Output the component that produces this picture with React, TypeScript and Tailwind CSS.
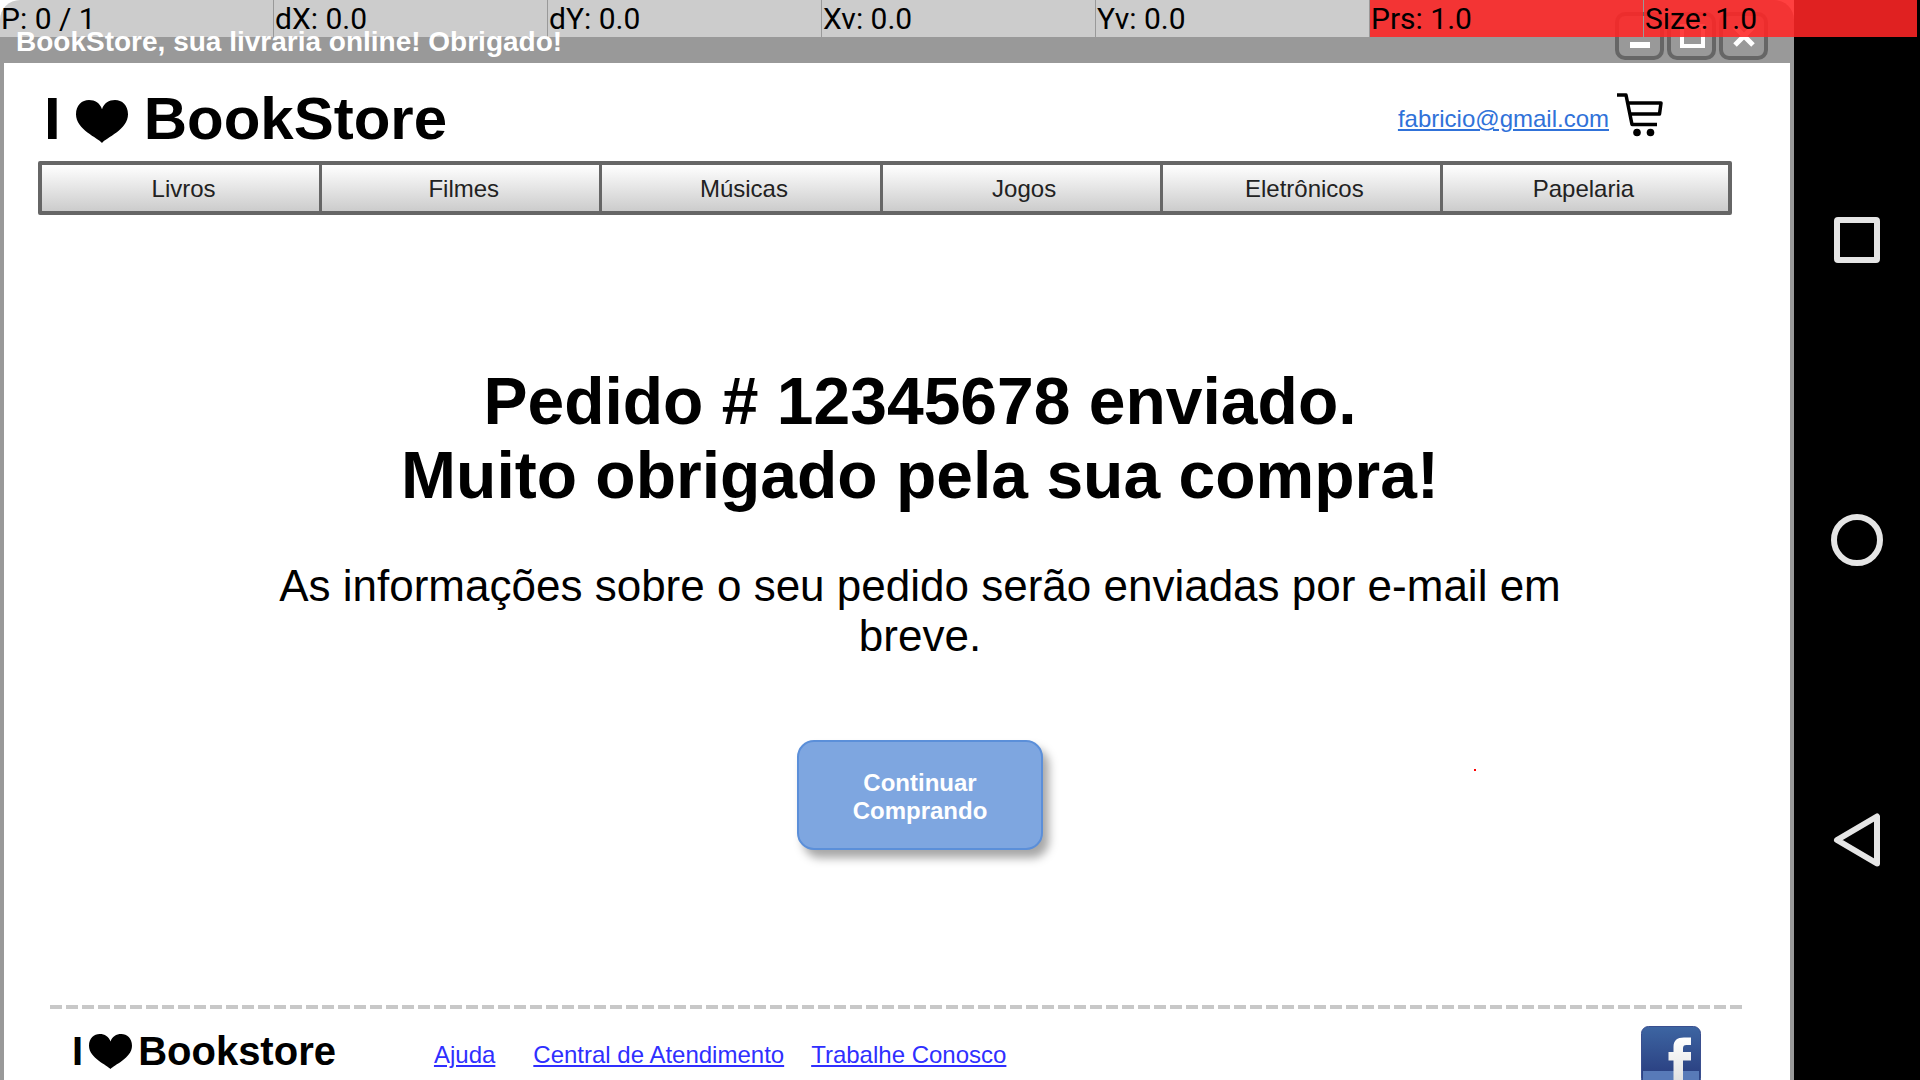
import type { ReactNode } from "react";

const stats = [
  { label: "P: 0 / 1", hot: false },
  { label: "dX: 0.0", hot: false },
  { label: "dY: 0.0", hot: false },
  { label: "Xv: 0.0", hot: false },
  { label: "Yv: 0.0", hot: false },
  { label: "Prs: 1.0", hot: true },
  { label: "Size: 1.0", hot: true },
];

const categories = ["Livros", "Filmes", "Músicas", "Jogos", "Eletrônicos", "Papelaria"];

function PointerBar() {
  return (
    <div className="absolute inset-x-0 top-0 flex h-[37px] gap-px pr-[3px] font-[Roboto,sans-serif] text-[30px] leading-[38px] text-black">
      {stats.map((s) => (
        <div
          key={s.label}
          className={
            s.hot
              ? "min-w-0 flex-1 bg-[#ff2525]/88 pl-px whitespace-nowrap"
              : "min-w-0 flex-1 bg-white/50 pl-px whitespace-nowrap"
          }
        >
          {s.label}
        </div>
      ))}
    </div>
  );
}

function Heart({ className }: { className: string }) {
  return (
    <svg viewBox="0 0 52 42" preserveAspectRatio="none" className={className} aria-hidden="true">
      <path d="M26 42C22 37 0 29 0 14C0 5 6 0 13 0C19 0 24 3 26 9C28 3 33 0 39 0C46 0 52 5 52 14C52 29 30 37 26 42Z" />
    </svg>
  );
}

function WindowButton({ label, children }: { label: string; children: ReactNode }) {
  return (
    <button
      type="button"
      aria-label={label}
      className="flex h-12 w-[49px] items-center justify-center rounded-[10px] border-4 border-[#666666] bg-[#999999]"
    >
      <svg viewBox="0 0 30 30" className="size-[30px]" fill="none" stroke="white" strokeWidth="5" aria-hidden="true">
        {children}
      </svg>
    </button>
  );
}

function Cart() {
  return (
    <svg viewBox="0 0 46 44" className="h-11 w-[46px]" fill="none" stroke="black" strokeWidth="3.5" aria-hidden="true">
      <path d="M0 2H9L15 31.5H40M11 10H44L42.5 21H13" strokeLinejoin="round" />
      <circle cx="20" cy="39.5" r="3.8" fill="black" stroke="none" />
      <circle cx="33.5" cy="39.5" r="3.8" fill="black" stroke="none" />
    </svg>
  );
}

function Facebook() {
  return (
    <svg viewBox="0 0 60 60" className="size-[60px]" aria-hidden="true">
      <defs>
        <linearGradient id="fb-body" x1="0" y1="0" x2="0" y2="1">
          <stop offset="0" stopColor="#3d65a2" />
          <stop offset="0.75" stopColor="#2c4384" />
        </linearGradient>
        <linearGradient id="fb-letter" x1="0" y1="0" x2="0" y2="1">
          <stop offset="0" stopColor="#ffffff" />
          <stop offset="1" stopColor="#dddddd" />
        </linearGradient>
      </defs>
      <rect x="0.5" y="0.5" width="59" height="59" rx="7" fill="url(#fb-body)" stroke="#3a4f8f" />
      <rect x="2" y="45" width="56" height="13" fill="#587ab8" />
      <path
        d="M32.500 60V34.500H27.500V26H32.500V21C32.500 14.500 36 11.500 43 11.500H50V19H45.500C43 19 42 20 42 22.500V26H50V34.500H42V60Z"
        fill="url(#fb-letter)"
      />
    </svg>
  );
}

function SystemNav() {
  return (
    <nav aria-label="Sistema" className="flex w-[126px] shrink-0 flex-col items-center justify-center gap-[244px] bg-black">
      <button type="button" aria-label="Recentes" className="flex size-14 items-center justify-center">
        <span className="size-[46px] rounded-[4px] border-[6px] border-[#e5e5e5]" />
      </button>
      <button type="button" aria-label="Início" className="flex size-14 items-center justify-center">
        <span className="size-[52px] rounded-full border-[6px] border-[#e5e5e5]" />
      </button>
      <button type="button" aria-label="Voltar" className="flex size-14 items-center justify-center">
        <svg viewBox="0 0 56 56" className="size-14" fill="none" stroke="#e5e5e5" strokeWidth="6" strokeLinejoin="round" aria-hidden="true">
          <path d="M8 28L48 4.500V51.500Z" />
        </svg>
      </button>
    </nav>
  );
}

export default function App() {
  return (
    <div className="relative flex h-screen overflow-hidden bg-white font-['Liberation_Sans',Arial,sans-serif] text-black">
      <div className="flex min-w-0 flex-1 flex-col overflow-hidden rounded-t-[20px] bg-[#999999]">
        <header className="flex h-[63px] shrink-0 items-end justify-between pr-[26px] pl-4">
          <h1 className="pb-[3px] text-[28px] leading-9 font-bold whitespace-nowrap text-white">
            BookStore, sua livraria online! Obrigado!
          </h1>
          <div className="flex gap-[3px] pb-[3px]">
            <WindowButton label="Minimizar">
              <path d="M5 24H25" strokeWidth="6" />
            </WindowButton>
            <WindowButton label="Maximizar">
              <rect x="5" y="5" width="21" height="20" strokeWidth="4" />
            </WindowButton>
            <WindowButton label="Fechar">
              <path d="M6 6L24 24M24 6L6 24" />
            </WindowButton>
          </div>
        </header>

        <main className="mx-1 flex min-h-0 flex-1 flex-col bg-white">
          <div className="flex h-[98px] shrink-0 items-center justify-between pt-[14px] pr-[127px] pl-10">
            <div className="flex items-center text-[60px] leading-[68px] font-bold">
              <span>I</span>
              <Heart className="mt-1 mr-4 ml-[15px] h-[43px] w-[52px]" />
              <span>BookStore</span>
            </div>
            <div className="flex items-center gap-2">
              <a href="#conta" className="text-2xl text-[#3072d9] underline decoration-2 underline-offset-2">
                fabricio@gmail.com
              </a>
              <a href="#carrinho" aria-label="Carrinho" className="pb-2">
                <Cart />
              </a>
            </div>
          </div>

          <nav
            aria-label="Categorias"
            className="mr-[58px] ml-[34px] grid h-[54px] shrink-0 grid-cols-[repeat(5,280fr)_288fr] gap-[3px] rounded-xs border-4 border-[#666666] bg-[#666666] text-2xl text-[#222222]"
          >
            {categories.map((c) => (
              <a
                key={c}
                href="#categoria"
                className="flex items-center justify-center bg-linear-to-b from-white to-[#cccccc] pt-0.5 pl-1.5 last:pr-1 last:pl-0"
              >
                {c}
              </a>
            ))}
          </nav>

          <section className="flex flex-1 flex-col items-center pt-[149px] pr-[64px] pl-[110px] text-center">
            <h2 className="text-[66px] leading-[74px] font-bold">
              Pedido # 12345678 enviado.
              <br />
              Muito obrigado pela sua compra!
            </h2>
            <p className="mt-[49px] max-w-[1320px] text-[44px] leading-[50px]">
              As informações sobre o seu pedido serão enviadas por e-mail em breve.
            </p>
            <button
              type="button"
              className="mt-[79px] h-[110px] w-[246px] rounded-[17px] border-2 border-[#5b8fd9] bg-[#7ea6e0] px-10 pt-1 text-2xl leading-7 font-bold text-white shadow-[6px_8px_10px_rgba(0,0,0,0.35)]"
            >
              Continuar Comprando
            </button>
          </section>

          <footer className="shrink-0 pr-12 pl-[46px]">
            <div className="h-1 bg-[repeating-linear-gradient(90deg,#c8c8c8_0_12px,transparent_12px_16px)]" />
            <div className="flex h-[71px] items-start pr-[41px] pl-[22px]">
              <div className="flex items-center pt-5 text-[40px] leading-[44px] font-bold">
                <span>I</span>
                <Heart className="mx-1.5 h-[35px] w-[43px]" />
                <span>Bookstore</span>
              </div>
              <div className="ml-[98px] flex items-center pt-8 text-2xl leading-7 text-[#2f2fff]">
                <a href="#ajuda" className="underline decoration-2 underline-offset-2">Ajuda</a>
                <a href="#central" className="ml-[38px] underline decoration-2 underline-offset-2">Central de Atendimento</a>
                <a href="#trabalhe" className="ml-[27px] underline decoration-2 underline-offset-2">Trabalhe Conosco</a>
              </div>
              <a href="#facebook" aria-label="Facebook" className="ml-auto pt-[17px]">
                <Facebook />
              </a>
            </div>
          </footer>
        </main>
      </div>
      <SystemNav />
      <PointerBar />
      <span className="absolute top-[769px] left-[1474px] size-0.5 bg-[#ff0000]" />
    </div>
  );
}
